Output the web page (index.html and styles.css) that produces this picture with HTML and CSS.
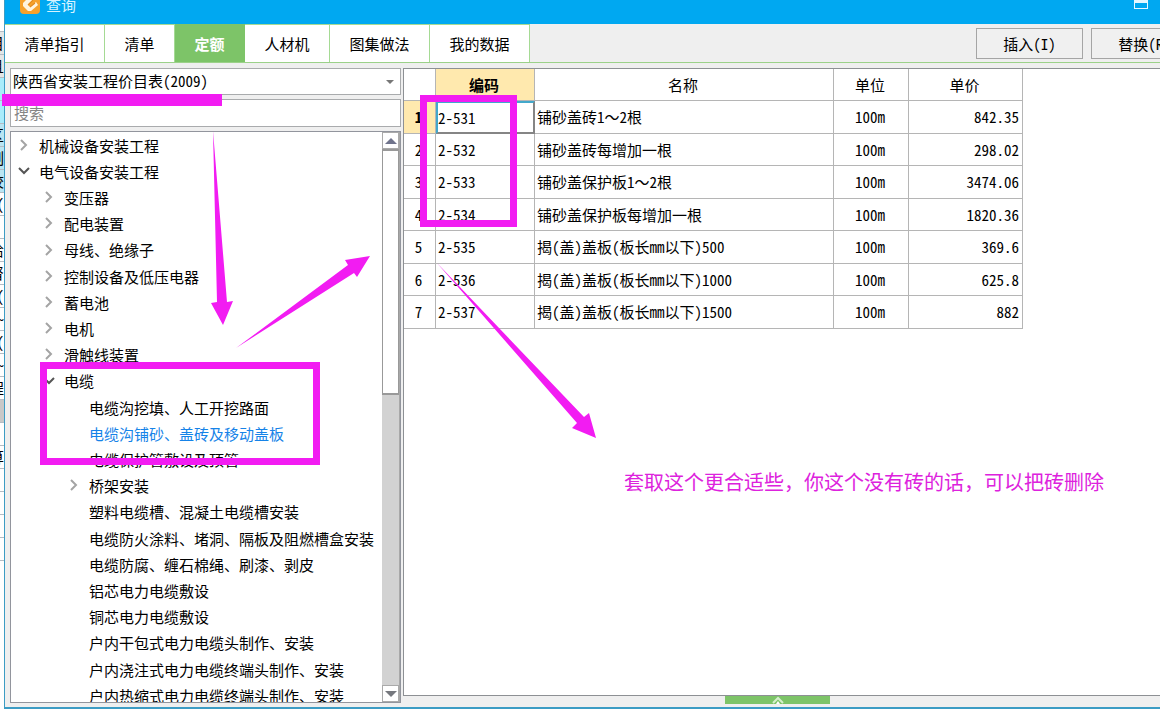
FILE: index.html
```
<!DOCTYPE html>
<html lang="zh-CN">
<head>
<meta charset="utf-8">
<title>查询</title>
<link rel="stylesheet" href="styles.css">
</head>
<body>
<div class="desktop">
  <div class="behind" aria-hidden="true">
    <i class="plain tall"></i><i class="head">目</i><i class="head">且</i>
    <i class="cyan"></i><i class="cyan"></i><i class="pale">区</i><i class="pale">制</i><i class="pale">校</i>
    <i>(</i><i></i><i>恰</i><i>督</i><i>(</i><i>~</i><i>(</i><i>~</i><i>程</i><i class="gray"></i><i></i><i>算</i><i></i><i></i><i></i><i></i>
  </div>
  <main class="window">
    <header class="titlebar">
      <svg class="logo" viewBox="0 0 20 20"><rect width="20" height="20" rx="4" fill="#f6a12c"/><path d="M3 9l7-7 4 3-6 6 2 2 6-5 2 3-7 6H8L3 12z" fill="#fff4df"/><path d="M8 11l5-5M10 13l5-4" stroke="#e58a1a" stroke-width="1.2"/></svg>
      <h1>查询</h1>
      <button class="maximize" aria-label="最大化"></button>
    </header>
    <nav class="tabs">
      <button class="tab wide">清单指引</button><button class="tab">清单</button><button class="tab active">定额</button><button class="tab mid">人材机</button><button class="tab wide">图集做法</button><button class="tab wide">我的数据</button>
      <div class="actions"><button class="action">插入(I)</button><button class="action">替换(R)</button></div>
    </nav>
    <div class="content">
      <aside class="sidebar">
        <div class="combo"><select aria-label="价目表"><option>陕西省安装工程价目表(2009)</option></select></div>
        <input class="search" type="text" placeholder="搜索" aria-label="搜索">
        <div class="tree-box">
          <ul class="tree">
            <li><svg viewBox="0 0 10 10"><path d="M2 0l5 5-5 5"/></svg>机械设备安装工程</li>
            <li><svg class="open" viewBox="0 0 10 10"><path d="M0 2l5 5 5-5"/></svg>电气设备安装工程</li>
            <li class="l1"><svg viewBox="0 0 10 10"><path d="M2 0l5 5-5 5"/></svg>变压器</li>
            <li class="l1"><svg viewBox="0 0 10 10"><path d="M2 0l5 5-5 5"/></svg>配电装置</li>
            <li class="l1"><svg viewBox="0 0 10 10"><path d="M2 0l5 5-5 5"/></svg>母线、绝缘子</li>
            <li class="l1"><svg viewBox="0 0 10 10"><path d="M2 0l5 5-5 5"/></svg>控制设备及低压电器</li>
            <li class="l1"><svg viewBox="0 0 10 10"><path d="M2 0l5 5-5 5"/></svg>蓄电池</li>
            <li class="l1"><svg viewBox="0 0 10 10"><path d="M2 0l5 5-5 5"/></svg>电机</li>
            <li class="l1"><svg viewBox="0 0 10 10"><path d="M2 0l5 5-5 5"/></svg>滑触线装置</li>
            <li class="l1"><svg class="open" viewBox="0 0 10 10"><path d="M0 2l5 5 5-5"/></svg>电缆</li>
            <li class="leaf">电缆沟挖填、人工开挖路面</li>
            <li class="leaf selected">电缆沟铺砂、盖砖及移动盖板</li>
            <li class="leaf">电缆保护管敷设及顶管</li>
            <li class="l2"><svg viewBox="0 0 10 10"><path d="M2 0l5 5-5 5"/></svg>桥架安装</li>
            <li class="leaf">塑料电缆槽、混凝土电缆槽安装</li>
            <li class="leaf">电缆防火涂料、堵洞、隔板及阻燃槽盒安装</li>
            <li class="leaf">电缆防腐、缠石棉绳、刷漆、剥皮</li>
            <li class="leaf">铝芯电力电缆敷设</li>
            <li class="leaf">铜芯电力电缆敷设</li>
            <li class="leaf">户内干包式电力电缆头制作、安装</li>
            <li class="leaf">户内浇注式电力电缆终端头制作、安装</li>
            <li class="leaf">户内热缩式电力电缆终端头制作、安装</li>
          </ul>
          <div class="scrollbar"><button class="arrow up" aria-label="向上"></button><div class="thumb"></div><div class="track"></div><button class="arrow down" aria-label="向下"></button></div>
        </div>
      </aside>
      <section class="main">
        <div class="grid-box">
          <table>
            <colgroup><col class="c-no"><col class="c-code"><col class="c-name"><col class="c-unit"><col class="c-price"></colgroup>
            <thead><tr><th></th><th class="hot">编码</th><th>名称</th><th>单位</th><th>单价</th></tr></thead>
            <tbody>
              <tr><td class="hot">1</td><td class="focus">2-531</td><td>铺砂盖砖1<span class="full">～</span>2根</td><td>100m</td><td>842.35</td></tr>
              <tr><td>2</td><td>2-532</td><td>铺砂盖砖每增加一根</td><td>100m</td><td>298.02</td></tr>
              <tr><td>3</td><td>2-533</td><td>铺砂盖保护板1<span class="full">～</span>2根</td><td>100m</td><td>3474.06</td></tr>
              <tr><td>4</td><td>2-534</td><td>铺砂盖保护板每增加一根</td><td>100m</td><td>1820.36</td></tr>
              <tr><td>5</td><td>2-535</td><td>揭(盖)盖板(板长mm以下)500</td><td>100m</td><td>369.6</td></tr>
              <tr><td>6</td><td>2-536</td><td>揭(盖)盖板(板长mm以下)1000</td><td>100m</td><td>625.8</td></tr>
              <tr><td>7</td><td>2-537</td><td>揭(盖)盖板(板长mm以下)1500</td><td>100m</td><td>882</td></tr>
            </tbody>
          </table>
        </div>
        <button class="expander" aria-label="展开"><svg viewBox="0 0 12 8"><path d="M1 7l5-5 5 5" fill="none" stroke="#d5efcc" stroke-width="2"/><path d="M4 8l2-3 2 3z" fill="#fff"/></svg></button>
      </section>
    </div>
  </main>
  <svg class="marks" width="1160" height="713" viewBox="0 0 1160 713" aria-hidden="true">
    <rect x="2" y="94" width="220" height="12"/>
    <path d="M213 131L227 302L233 301L223 325L211 303L217 302Z"/>
    <path d="M236 348L348 265L345 260L370 256L357 277L354 273Z"/>
    <path d="M437 263L584 417L589 413L596 438L572 428L577 423Z"/>
    <path class="frame" d="M423.500 98.500H513.500V223.500H423.500Z"/>
    <path class="frame" d="M43.500 365.500H316.500V461.500H43.500Z"/>
  </svg>
  <p class="note">套取这个更合适些，你这个没有砖的话，可以把砖删除</p>
</div>
</body>
</html>
```
FILE: styles.css
```
* { box-sizing: border-box; }
body { margin: 0; }
body, button, input, select {
  font-family: "Noto Sans CJK SC", sans-serif;
  font-size: 15px;
  font-feature-settings: "hwid";
  color: #000;
}
button { padding: 0; border: 0; border-radius: 0; }
.full { font-feature-settings: normal; }

.desktop { position: relative; display: flex; height: 100vh; padding-bottom: 4px; background: #fff; overflow: hidden; }

/* sliver of the window underneath */
.behind { flex: 0 0 4px; display: flex; flex-direction: column; overflow: hidden; }
.behind i {
  flex: 0 0 23px; display: flex; justify-content: flex-end; width: 4px;
  border-bottom: 1px solid #b5bcc4; font-style: normal; line-height: 22px; overflow: hidden;
}
.behind .tall { flex-basis: 32px; }
.behind .head { background: #e3e6e6; }
.behind .cyan { background: #a9ecfb; }
.behind .pale { background: #b9e5f2; }
.behind .gray { background: #c8c8c8; }

.window {
  flex: 1; min-width: 0; display: flex; flex-direction: column;
  border: solid #3c9cc4; border-width: 0 0 2px 1px; background: #efefef;
}
.titlebar { flex: 0 0 24px; display: flex; align-items: flex-start; background: #00a8f1; overflow: hidden; }
.logo { width: 20px; height: 20px; margin: -6px 6px 0 15px; }
.titlebar h1 { margin: -7px 0 0; font-size: 15px; font-weight: 400; line-height: 24px; color: #d6f3ff; }
.maximize { width: 14px; height: 15px; margin: -6px 12px 0 auto; border: 1px solid #e6f7ff; border-top-width: 9px; background: #00a8f1; }

.tabs { flex: 0 0 39px; display: flex; border-bottom: 1px solid #9bd189; overflow: hidden; }
.tab { flex: 0 0 70px; background: #fff; border: solid #a5da94; border-width: 1px 1px 0 0; }
.tab.wide { flex-basis: 100px; }
.tab.mid { flex-basis: 85px; }
.tab.active { background: #7dc468; border-color: #7dc468; color: #fff; font-weight: 700; }
.actions { display: flex; gap: 8px; margin: 4px -38px 3px auto; }
.action { width: 107px; background: #f0f0f0; border: 1px solid #a5a5a5; }

.content { flex: 1; min-height: 0; display: flex; }
.sidebar { flex: 0 0 396px; display: flex; flex-direction: column; gap: 4px; padding: 5px 0 4px 5px; min-height: 0; }
.combo { position: relative; flex: 0 0 27px; }
.combo::after {
  content: ""; position: absolute; right: 7px; top: 12px;
  border: solid transparent; border-width: 4px 4px 0; border-top-color: #777;
}
.combo select { width: 100%; height: 27px; padding: 0 2px 2px; appearance: none; background: #fff; border: 1px solid #a9abad; border-radius: 0; }
.search { flex: 0 0 28px; width: 100%; padding: 0 3px 2px; border: 1px solid #a9abad; background: #fff; }
.search::placeholder { color: #858585; }
.tree-box { flex: 1; min-height: 0; display: flex; border: 1px solid #92959d; background: #fff; }
.tree { flex: 1; min-width: 0; margin: 0; padding: 0; list-style: none; overflow: hidden; }
.tree li { display: flex; align-items: center; gap: 10px; height: 26px; padding-left: 8px; white-space: nowrap; }
.tree li:nth-child(5n) { height: 27px; }
.tree .l1 { padding-left: 33px; }
.tree .l2 { padding-left: 58px; }
.tree .leaf { padding-left: 78px; }
.tree .selected { color: #1683e8; }
.tree svg { width: 10px; height: 10px; overflow: visible; fill: none; stroke: #a4a4a4; stroke-width: 2; }
.tree .open { stroke: #555; }
.scrollbar { flex: 0 0 18px; display: flex; flex-direction: column; border-right: 1px solid #a8a8a8; }
.arrow { flex: 0 0 17px; display: grid; place-items: center; background: #fff; border: 1px solid #aaa; }
.arrow::before { content: ""; border: solid transparent; }
.up::before { border-width: 0 6px 6px; border-bottom-color: #70748c; }
.down::before { border-width: 6px 6px 0; border-top-color: #76787e; }
.thumb { flex: 244; background: #fff; border: 1px solid #999; border-width: 2px 1px; }
.track { flex: 292; background: #d2d2d2; }

.main { flex: 1; min-width: 0; display: flex; flex-direction: column; align-items: center; padding: 5px 0 3px 2px; }
.grid-box { flex: 1; align-self: stretch; background: #fff; border: solid #8d9094; border-width: 1px 0 1px 1px; overflow: hidden; }
.expander { flex: 0 0 8px; display: grid; place-items: center; width: 105px; margin-right: 8px; background: #7dc468; }
.expander svg { width: 12px; height: 8px; }

table { border-collapse: separate; border-spacing: 0; table-layout: fixed; width: 619px; }
.c-no { width: 32px; }
.c-code { width: 99px; }
.c-name { width: 299px; }
.c-unit { width: 75px; }
.c-price { width: 114px; }
th, td { height: 32px; padding: 0 2px; border: solid #b5b5b5; border-width: 0 1px 1px 0; font-weight: 400; text-align: left; white-space: nowrap; line-height: 20px; }
tbody tr:nth-child(odd) td { height: 33px; }
th, td:first-child, td:nth-child(4) { padding-right: 4px; text-align: center; }
td:last-child { padding-right: 3px; text-align: right; }
.hot { background: #ffe9ae; font-weight: 700; }
.focus { border: 2px solid #858585; border-top-color: #42a8cb; border-left-color: #42a8cb; padding-left: 0; }

/* drawn annotations */
.marks { position: absolute; left: 0; top: 0; fill: #f21cf2; pointer-events: none; }
.marks .frame { fill: none; stroke: #f21cf2; stroke-width: 7; }
.note { position: absolute; left: 624px; top: 468px; margin: 0; font-size: 20px; line-height: 28px; font-feature-settings: normal; color: #dd22dd; white-space: nowrap; }
```
